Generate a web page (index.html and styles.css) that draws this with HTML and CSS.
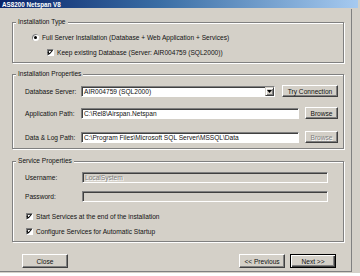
FILE: index.html
```html
<!DOCTYPE html>
<html>
<head>
<meta charset="utf-8">
<link rel="stylesheet" href="styles.css">
</head>
<body>
<div class="window">
  <div class="title">AS8200 Netspan V8</div>
  <div class="dialog">
    <fieldset class="group g1">
      <legend>Installation Type</legend>
      <div class="row radio-row"><span class="radio"><span class="dot"></span></span><span>Full Server Installation (Database + Web Application + Services)</span></div>
      <div class="row check-row indent"><span class="check"><svg viewBox="0 0 7 7" width="7" height="7"><path d="M1 3 L3 5 L6 1.5" fill="none" stroke="#000" stroke-width="1.2"/></svg></span><span>Keep existing Database (Server: AIR004759 (SQL2000))</span></div>
    </fieldset>

    <fieldset class="group g2">
      <legend>Installation Properties</legend>
      <div class="row field-row r1">
        <span class="label">Database Server:</span>
        <div class="combo"><span class="combo-text">AIR004759 (SQL2000)</span><span class="combo-btn"><svg viewBox="0 0 7 4" width="5" height="3"><path d="M0 0 H7 L3.5 4 Z" fill="#000"/></svg></span></div>
        <button class="btn try">Try Connection</button>
      </div>
      <div class="row field-row r2">
        <span class="label">Application Path:</span>
        <div class="input path">C:\Rel8\Airspan.Netspan</div>
        <button class="btn browse">Browse</button>
      </div>
      <div class="row field-row r3">
        <span class="label">Data &amp; Log Path:</span>
        <div class="input path">C:\Program Files\Microsoft SQL Server\MSSQL\Data</div>
        <button class="btn browse disabled">Browse</button>
      </div>
    </fieldset>

    <fieldset class="group g3">
      <legend>Service Properties</legend>
      <div class="row field-row s1">
        <span class="label">Username:</span>
        <div class="input wide off"><span class="graytext">LocalSystem</span></div>
      </div>
      <div class="row field-row s2">
        <span class="label">Password:</span>
        <div class="input wide off"></div>
      </div>
      <div class="row check-row c1"><span class="check"><svg viewBox="0 0 7 7" width="7" height="7"><path d="M1 3 L3 5 L6 1.5" fill="none" stroke="#000" stroke-width="1.2"/></svg></span><span>Start Services at the end of the installation</span></div>
      <div class="row check-row c2"><span class="check"><svg viewBox="0 0 7 7" width="7" height="7"><path d="M1 3 L3 5 L6 1.5" fill="none" stroke="#000" stroke-width="1.2"/></svg></span><span>Configure Services for Automatic Startup</span></div>
    </fieldset>

    <div class="buttons">
      <button class="btn nav">Close</button>
      <div class="spacer"></div>
      <button class="btn nav">&lt;&lt; Previous</button>
      <button class="btn nav default">Next &gt;&gt;</button>
    </div>
  </div>
</div>
</body>
</html>
```
FILE: styles.css
```css
html, body {
  margin: 0;
  padding: 0;
  background: #ffffff;
}
body {
  width: 360px;
  height: 276px;
  overflow: hidden;
  font-family: "Liberation Sans", Arial, sans-serif;
  font-size: 6.6px;
  color: #111;
}
.window {
  width: 360px;
  height: 273px;
  background: #d4d0c8;
}
.title {
  width: 358px;
  height: 9px;
  line-height: 9px;
  padding-left: 2px;
  box-sizing: border-box;
  background: linear-gradient(to right, #0a246a 0%, #3a6ea5 45%, #a6caf0 100%);
  color: #fff;
  font-weight: bold;
  font-size: 6.3px;
  border-bottom: 1px solid #d4d0c8;
}
.dialog {
  width: 352px;
  height: 263px;
  box-sizing: border-box;
  border-right: 1px solid #808080;
  border-bottom: 1px solid #808080;
  padding-top: 9px;
  display: flex;
  flex-direction: column;
}
.group {
  margin: 0 0 0 12px;
  width: 332px;
  box-sizing: border-box;
  border: 1px solid #808080;
  box-shadow: 1px 1px 0 #fff, inset 1px 1px 0 #fff;
  padding: 0;
  min-width: 0;
  display: flex;
  flex-direction: column;
}
.group legend {
  margin-left: 3px;
  padding: 0 2px;
  line-height: 8px;
  height: 8px;
  background: #d4d0c8;
}
.g1 { height: 45px; margin-top: 0; padding-top: 5px; }
.g2 { height: 79px; margin-top: 7px; padding-top: 7px; }
.g3 { height: 85px; margin-top: 8px; padding-top: 6px; }

.row {
  display: flex;
  align-items: center;
  height: 12px;
  white-space: nowrap;
}
.radio-row { padding-left: 19px; gap: 3px; }
.check-row.indent { padding-left: 34px; margin-top: 3px; gap: 3px; }

.radio {
  width: 7px;
  height: 7px;
  border-radius: 50%;
  background: #fff;
  box-shadow: inset 1px 1px 0 #808080;
  display: flex;
  align-items: center;
  justify-content: center;
  flex: none;
}
.dot {
  width: 3px;
  height: 3px;
  background: #000;
  border-radius: 50%;
}
.check {
  width: 7px;
  height: 7px;
  background: #fff;
  box-sizing: border-box;
  border-top: 1px solid #808080;
  border-left: 1px solid #808080;
  border-right: 1px solid #fff;
  border-bottom: 1px solid #fff;
  box-shadow: inset 1px 1px 0 #404040;
  display: flex;
  flex: none;
}
.check svg {
  margin: -1px 0 0 -1px;
}

.field-row { padding-left: 12px; }
.label { width: 56px; flex: none; }
.r2 { margin-top: 10px; }
.r3 { margin-top: 12px; }

.input, .combo {
  height: 11px;
  box-sizing: border-box;
  background: #fff;
  border-top: 1px solid #808080;
  border-left: 1px solid #808080;
  border-right: 1px solid #fff;
  border-bottom: 1px solid #fff;
  box-shadow: inset 1px 1px 0 #404040;
  display: flex;
  align-items: center;
  padding-left: 2px;
  line-height: 9px;
  flex: none;
  overflow: hidden;
}
.combo { width: 194px; padding-left: 0; }
.combo-text { flex: 1; padding-left: 2px; }
.combo-btn {
  width: 9px;
  height: 9px;
  box-sizing: border-box;
  background: #d4d0c8;
  border-top: 1px solid #d4d0c8;
  border-left: 1px solid #d4d0c8;
  border-right: 1px solid #404040;
  border-bottom: 1px solid #404040;
  box-shadow: inset 1px 1px 0 #fff, inset -1px -1px 0 #808080;
  display: flex;
  align-items: center;
  justify-content: center;
}
.path { width: 218px; }
.wide { width: 246px; }
.off { background: #d4d0c8; }
.graytext { color: #808080; text-shadow: 1px 1px 0 #fff; }

.btn {
  font-family: inherit;
  font-size: inherit;
  color: #111;
  background: #d4d0c8;
  box-sizing: border-box;
  border-top: 1px solid #fff;
  border-left: 1px solid #fff;
  border-right: 1px solid #404040;
  border-bottom: 1px solid #404040;
  box-shadow: inset -1px -1px 0 #808080;
  padding: 0;
  margin: 0;
  height: 12px;
  line-height: 9px;
  flex: none;
  white-space: nowrap;
}
.try { width: 56px; margin-left: 7px; }
.browse { width: 33px; margin-left: 6px; }
.disabled { color: #808080; text-shadow: 1px 1px 0 #fff; }

.s2 { margin-top: 7px; }
.s1 .label, .s2 .label { width: 57px; }
.c1 { padding-left: 13px; margin-top: 8px; gap: 3px; }
.c2 { padding-left: 13px; margin-top: 3px; gap: 3px; }

.buttons {
  display: flex;
  align-items: center;
  margin-top: 12px;
  padding-left: 22px;
  padding-right: 15px;
  gap: 5px;
}
.buttons .spacer { flex: 1; }
.nav { width: 46px; height: 14px; }
.default {
  border: 1px solid #000;
  box-shadow: inset 1px 1px 0 #fff, inset -1px -1px 0 #404040, inset -2px -2px 0 #808080;
}
```
